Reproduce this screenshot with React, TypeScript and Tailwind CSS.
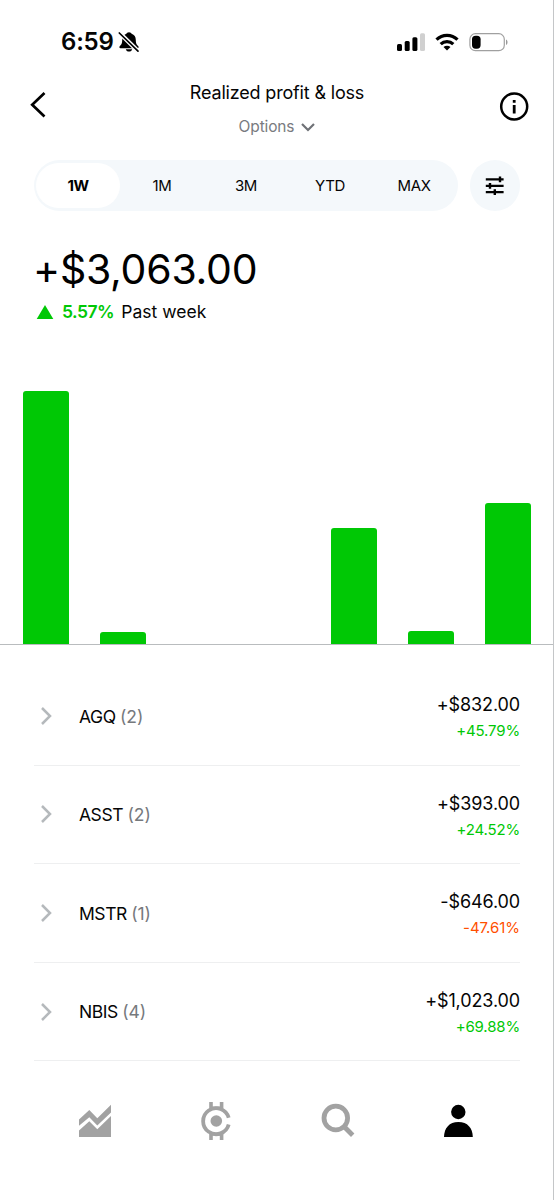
import React from "react";

const tabs = [
  { label: "1W", active: true },
  { label: "1M" },
  { label: "3M" },
  { label: "YTD" },
  { label: "MAX" },
];

const bars = [253, 12, 0, 0, 116, 13, 141];

const positions = [
  { symbol: "AGQ", count: 2, amount: "+$832.00", percent: "+45.79%", up: true },
  { symbol: "ASST", count: 2, amount: "+$393.00", percent: "+24.52%", up: true },
  { symbol: "MSTR", count: 1, amount: "-$646.00", percent: "-47.61%", up: false },
  { symbol: "NBIS", count: 4, amount: "+$1,023.00", percent: "+69.88%", up: true },
];

function BellOff() {
  return (
    <svg width="22" height="22" viewBox="0 0 22 22">
      <path d="M11 1.2c-1.5 0-2.3.8-2.6 1.6C5.600 3.700 4.200 6 4.200 9c0 4-1.300 5-2.500 6.300-.8 1-.2 1.900.8 1.900h17c1 0 1.600-.9.8-1.900C19.100 14 17.800 13 17.800 9c0-3-1.400-5.300-4.200-6.200-.3-.8-1.100-1.600-2.600-1.600zM7.800 18.300h6.400c-.4 1.500-1.600 2.300-3.200 2.300s-2.800-.8-3.200-2.300z" fill="#000" />
      <path d="M1 1.500 20.500 20.500" stroke="#fff" strokeWidth="4.400" />
      <path d="M1.300 2 20 20.200" stroke="#000" strokeWidth="1.700" strokeLinecap="round" />
    </svg>
  );
}

function StatusIcons() {
  return (
    <svg width="112" height="20" viewBox="396 31 112 20">
      <rect x="397" y="43" width="5" height="7" rx="1.500" />
      <rect x="404.700" y="40" width="5" height="10" rx="1.500" />
      <rect x="412.400" y="36.300" width="5" height="13.700" rx="1.500" />
      <rect x="420" y="32.300" width="5" height="17.700" rx="1.500" fill="#d0d0d0" />
      <g fill="none" stroke="#000" strokeWidth="3.200">
        <path d="M436.500 38.700a15 15 0 0 1 21 0" />
        <path d="M440.700 43.100a9 9 0 0 1 12.600 0" />
      </g>
      <path d="M447 49.600l-3.500-3.500a5 5 0 0 1 7 0z" />
      <rect x="469.900" y="32.700" width="34.400" height="17" rx="5.500" fill="#fff" stroke="#a0a0a0" strokeWidth="1.200" />
      <rect x="472" y="34.700" width="8.600" height="13" rx="3.600" />
      <path d="M506 38.500c2 .8 2 4.700 0 5.500z" fill="#999" />
    </svg>
  );
}

export default function App() {
  return (
    <div className="flex h-[1200px] w-[554px] flex-col overflow-hidden border-r border-[#c4c6c8] bg-white font-['Inter',sans-serif] text-[#050505]">
      <header className="flex h-[83px] shrink-0 items-center justify-between pr-[45px] pl-[61px]">
        <div className="flex items-center gap-1">
          <span className="text-[24px] leading-none font-semibold tracking-[-0.2px]">6:59</span>
          <BellOff />
        </div>
        <StatusIcons />
      </header>

      <div className="flex h-[77px] shrink-0 items-start justify-between pr-6 pl-7">
        <button className="mt-[7px] w-[57px]" aria-label="Back">
          <svg width="20" height="30" viewBox="0 0 20 30" fill="none" stroke="#000" strokeWidth="2.700">
            <path d="M16.500 3 4.200 14.700 16.500 26.500" />
          </svg>
        </button>
        <div className="flex flex-col items-center">
          <h1 className="h-5 text-[18px] leading-5 tracking-[-0.17px]">Realized profit &amp; loss</h1>
          <button className="mt-[14px] flex h-5 items-center gap-[7px] text-[15.500px] leading-5 tracking-[-0.15px] text-[#797b80]">
            <span>Options</span>
            <svg width="14" height="10" viewBox="0 0 14 10" fill="none" stroke="#6f7277" strokeWidth="2.200">
              <path d="M1 2 7 8l6-6" />
            </svg>
          </button>
        </div>
        <button className="mt-[9px] flex w-[60px] justify-end" aria-label="Information">
          <svg width="30" height="30" viewBox="0 0 30 30">
            <circle cx="15.200" cy="14.500" r="13" fill="none" stroke="#000" strokeWidth="2.500" />
            <path d="M13.800 8h2.800v2.800h-2.800zM13.800 13h2.800v8.500h-2.800z" />
          </svg>
        </button>
      </div>

      <div className="flex h-[51px] shrink-0 items-stretch gap-3 pl-[34px]">
        <nav className="flex w-[424px] rounded-full bg-[#f4f8fb] px-0.5 py-[3px]">
          {tabs.map((t) => (
            <button
              key={t.label}
              className={
                t.active
                  ? "w-[84px] rounded-full bg-white pt-0.5 text-[15px] font-bold tracking-[-0.5px] text-black"
                  : "w-[84px] pt-0.5 text-[15px] tracking-[-0.4px]"
              }
            >
              {t.label}
            </button>
          ))}
        </nav>
        <button className="flex w-[50px] items-center justify-center rounded-full bg-[#f4f8fb]" aria-label="Filters">
          <svg width="20" height="20" viewBox="0 0 20 20" fill="none" stroke="#000" strokeWidth="2.200">
            <path d="M.8 3.400h17.800M.8 9.800h17.800M.8 16.200h17.800" />
            <path d="M15 .5v5.800M5 6.900v5.800M9.800 13.300v5.800" strokeWidth="2.400" />
          </svg>
        </button>
      </div>

      <section className="flex h-[180px] shrink-0 flex-col pt-[37px] pl-[34px]">
        <div className="-ml-px h-[42px] text-[41px] leading-[42px] tracking-[-0.25px] text-black">+$3,063.00</div>
        <div className="mt-3 flex h-5 items-center text-[17.500px] leading-5">
          <svg width="20" height="16" viewBox="0 0 20 16" fill="#00c805">
            <path d="M11 1 19.300 15H2.700z" />
          </svg>
          <span className="ml-2 font-semibold tracking-[-0.5px] text-[#00c805]">5.57%</span>
          <span className="ml-[7px] tracking-[0.03px]">Past week</span>
        </div>
      </section>

      <section className="flex h-[254px] shrink-0 items-end gap-[31.500px] border-b-[1.500px] border-[#b9bcbe] pl-[23px]">
        {bars.map((height, i) => (
          <div key={i} className="w-[45.500px] shrink-0 rounded-t-[3px] bg-[#00c805]" style={{ height }} />
        ))}
      </section>

      <ul className="mt-[22px] mr-[33px] ml-[34px] shrink-0">
        {positions.map((p) => (
          <li key={p.symbol} className="flex h-[98.600px] items-center border-b border-[#eeeff0]">
            <svg width="14" height="20" viewBox="0 0 14 20" fill="none" stroke="#b5b9bc" strokeWidth="2.500" className="ml-[5px]">
              <path d="M3 2 11 10 3 18" />
            </svg>
            <span className="ml-[26px] pt-[1.500px] text-[17.500px] leading-5 tracking-[-0.45px]">
              {p.symbol} <span className="tracking-[-0.1px] text-[#76797d]">({p.count})</span>
            </span>
            <div className="ml-auto flex flex-col items-end pt-[5px]">
              <span className="text-[18px] leading-[26px] tracking-[-0.12px]">{p.amount}</span>
              <span className={p.up ? "text-[15px] leading-[26px] tracking-[-0.15px] text-[#00c805]" : "text-[15px] leading-[26px] tracking-[-0.05px] text-[#ff5000]"}>
                {p.percent}
              </span>
            </div>
          </li>
        ))}
      </ul>

      <footer className="flex h-[120px] shrink-0 items-center justify-between pr-[75px] pl-[75px]">
        <svg width="40" height="40" viewBox="75 1101 40 40" fill="#a2a2a2">
          <path d="M79 1119.500 89.300 1110 97.300 1118.300 111 1104.800V1112.500L97.300 1125.500 89.300 1117.300 79 1125.800z" />
          <path d="M79 1130.500 89.300 1121.200 97.300 1129.300 111 1116V1137H79z" />
        </svg>
        <svg width="40" height="40" viewBox="196 1101 40 40">
          <g fill="none" stroke="#a2a2a2">
            <path d="M228.700 1117.800A13 13 0 1 0 228.700 1124.500" strokeWidth="3.800" />
            <path d="M211 1102v7M221.600 1102v7M211 1140v-7M221.600 1140v-7" strokeWidth="3.600" />
            <path d="M210 1108h12.500M210 1134.200h12.500" strokeWidth="3" />
          </g>
          <circle cx="216.300" cy="1121" r="5.800" fill="#a2a2a2" />
        </svg>
        <svg width="40" height="40" viewBox="317 1101 40 40" fill="none" stroke="#a2a2a2">
          <circle cx="335.800" cy="1118" r="11.800" strokeWidth="4.800" />
          <path d="M343.500 1126 352.700 1135.300" strokeWidth="4.800" />
        </svg>
        <svg width="40" height="40" viewBox="438 1101 40 40">
          <circle cx="458.300" cy="1112" r="7.200" />
          <path d="M444 1137c.2-9 5.200-15 14.400-15s14.200 6 14.400 15z" />
        </svg>
      </footer>
    </div>
  );
}
